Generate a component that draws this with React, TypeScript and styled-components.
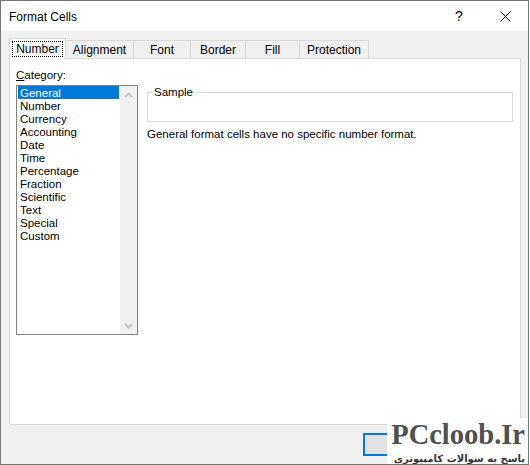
import styled, { createGlobalStyle } from "styled-components";

const GlobalStyle = createGlobalStyle`
  html, body {
    margin: 0;
    padding: 0;
    background: #fff;
  }
  body {
    font-family: "Liberation Sans", "Segoe UI", sans-serif;
    font-size: 11.5px;
    color: #000;
  }
`;

const tabs = [
  { name: "Number", width: 57 },
  { name: "Alignment", width: 69 },
  { name: "Font", width: 58 },
  { name: "Border", width: 56 },
  { name: "Fill", width: 55 },
  { name: "Protection", width: 70 },
];

const categories = [
  "General",
  "Number",
  "Currency",
  "Accounting",
  "Date",
  "Time",
  "Percentage",
  "Fraction",
  "Scientific",
  "Text",
  "Special",
  "Custom",
];

const Chevron = ({ down }: { down?: boolean }) => (
  <svg width="9" height="6" viewBox="0 0 9 6">
    <path
      d={down ? "M1 1 L4.5 4.5 L8 1" : "M1 5 L4.5 1.5 L8 5"}
      fill="none"
      stroke="#bcbcbc"
      strokeWidth="1.6"
    />
  </svg>
);

const App = () => {
  return (
    <>
      <GlobalStyle />
      <Window>
        <TitleBar>
          <Title>Format Cells</Title>
          <CaptionButton>?</CaptionButton>
          <CaptionButton>
            <svg width="11" height="11" viewBox="0 0 11 11">
              <path d="M0.5 0.5 L10.5 10.5 M10.5 0.5 L0.5 10.5" stroke="#000" strokeWidth="1" />
            </svg>
          </CaptionButton>
        </TitleBar>
        <Body>
          <TabRow>
            {tabs.map((t, i) => (
              <Tab key={t.name} $w={t.width} $active={i === 0}>
                {i === 0 ? <Focus>{t.name}</Focus> : t.name}
              </Tab>
            ))}
          </TabRow>
          <Panel>
            <PanelGrid>
              <FieldLabel>
                <u>C</u>ategory:
              </FieldLabel>
              <ListBox>
                <Items>
                  {categories.map((c, i) => (
                    <Item key={c} $selected={i === 0}>
                      <span>{c}</span>
                    </Item>
                  ))}
                </Items>
                <ScrollBar>
                  <ArrowCell>
                    <Chevron />
                  </ArrowCell>
                  <ArrowCell>
                    <Chevron down />
                  </ArrowCell>
                </ScrollBar>
              </ListBox>
              <Details>
                <Group>
                  <legend>Sample</legend>
                  <GroupInner />
                </Group>
                <Description>General format cells have no specific number format.</Description>
              </Details>
            </PanelGrid>
          </Panel>
          <Footer>
            <Button $default />
            <Button />
          </Footer>
        </Body>
        <Watermark>
          <span className="brand">PCcloob.Ir</span>
          <span className="tag">پاسخ به سوالات کامپیوتری</span>
        </Watermark>
      </Window>
    </>
  );
};

export default App;

const Window = styled.div`
  position: relative;
  box-sizing: border-box;
  width: 529px;
  height: 465px;
  border: 1px solid #777;
  display: flex;
  flex-direction: column;
  overflow: hidden;
`;

const TitleBar = styled.div`
  height: 30px;
  background: #fff;
  display: flex;
  align-items: center;
  padding-left: 8px;
`;

const Title = styled.div`
  flex: 1;
  font-size: 12px;
  padding-top: 1px;
`;

const CaptionButton = styled.div`
  width: 46px;
  height: 30px;
  display: flex;
  align-items: center;
  justify-content: center;
  font-size: 14px;
`;

const Body = styled.div`
  flex: 1;
  background: #f0f0f0;
  display: flex;
  flex-direction: column;
  padding: 8px 7px 0 8px;
  min-height: 0;
`;

const TabRow = styled.div`
  display: flex;
  align-items: flex-end;
  height: 20px;
  margin-bottom: -1px;
  position: relative;
  z-index: 1;
`;

const Tab = styled.div<{ $w: number; $active?: boolean }>`
  box-sizing: border-box;
  width: ${({ $w }) => $w}px;
  height: ${({ $active }) => ($active ? 21 : 19)}px;
  margin-left: -1px;
  &:first-child {
    margin-left: 0;
  }
  border: 1px solid #d9d9d9;
  border-bottom: ${({ $active }) => ($active ? "none" : "1px solid #d9d9d9")};
  background: ${({ $active }) => ($active ? "#fff" : "#f0f0f0")};
  display: flex;
  align-items: center;
  justify-content: center;
  padding-top: ${({ $active }) => ($active ? 0 : 1)}px;
  font-size: 12px;
`;

const Focus = styled.span`
  border: 1px dotted #000;
  padding: 0 3px;
  line-height: 14px;
`;

const Panel = styled.div`
  flex: 1;
  background: #fff;
  border: 1px solid #d9d9d9;
  padding: 9px 7px 0 6px;
  min-height: 0;
`;

const PanelGrid = styled.div`
  display: grid;
  grid-template-columns: 122px 1fr;
  grid-template-rows: 15px auto;
  column-gap: 9px;
  row-gap: 2px;
`;

const FieldLabel = styled.div`
  line-height: 15px;
  grid-column: 1;
  grid-row: 1;
`;

const ListBox = styled.div`
  grid-column: 1;
  grid-row: 2;
  box-sizing: border-box;
  height: 250px;
  border: 1px solid #828282;
  display: flex;
`;

const Items = styled.div`
  flex: 1;
  padding: 0 1px;
`;

const Item = styled.div<{ $selected?: boolean }>`
  height: 13px;
  padding-left: 2px;
  white-space: nowrap;
  background: ${({ $selected }) => ($selected ? "#0078d7" : "transparent")};
  color: ${({ $selected }) => ($selected ? "#fff" : "#000")};
  span {
    display: block;
    line-height: 13px;
    transform: translateY(1px);
  }
`;

const ScrollBar = styled.div`
  width: 17px;
  background: #f0f0f0;
  display: flex;
  flex-direction: column;
  justify-content: space-between;
`;

const ArrowCell = styled.div`
  height: 17px;
  display: flex;
  align-items: center;
  justify-content: center;
`;

const Details = styled.div`
  grid-column: 2;
  grid-row: 2;
`;

const Group = styled.fieldset`
  margin: 0;
  padding: 0 4px;
  border: 1px solid #dcdcdc;
  legend {
    padding: 0 2px;
    line-height: 15px;
    font-size: 11.5px;
  }
`;

const GroupInner = styled.div`
  height: 21px;
`;

const Description = styled.div`
  margin-top: 5px;
  line-height: 15px;
`;

const Footer = styled.div`
  height: 39px;
  box-sizing: border-box;
  padding-top: 8px;
  display: flex;
  justify-content: flex-end;
  align-items: flex-start;
  gap: 8px;
`;

const Button = styled.div<{ $default?: boolean }>`
  box-sizing: border-box;
  width: 75px;
  height: 23px;
  background: #e1e1e1;
  border: ${({ $default }) => ($default ? "2px solid #0078d7" : "1px solid #adadad")};
`;

const Watermark = styled.div`
  position: absolute;
  right: -1px;
  bottom: -1px;
  box-sizing: border-box;
  width: 142px;
  height: 47px;
  padding: 0 4px 0 2px;
  background: #fff;
  display: flex;
  flex-direction: column;
  align-items: flex-end;
  .brand {
    display: block;
    font-family: "Liberation Serif", serif;
    font-weight: bold;
    font-size: 28.5px;
    line-height: 34px;
    height: 34px;
    color: #505050;
    white-space: nowrap;
  }
  .tag {
    display: block;
    direction: rtl;
    font-family: "DejaVu Sans", sans-serif;
    font-weight: bold;
    font-size: 10px;
    line-height: 13px;
    height: 13px;
    color: #333;
    white-space: nowrap;
  }
`;
